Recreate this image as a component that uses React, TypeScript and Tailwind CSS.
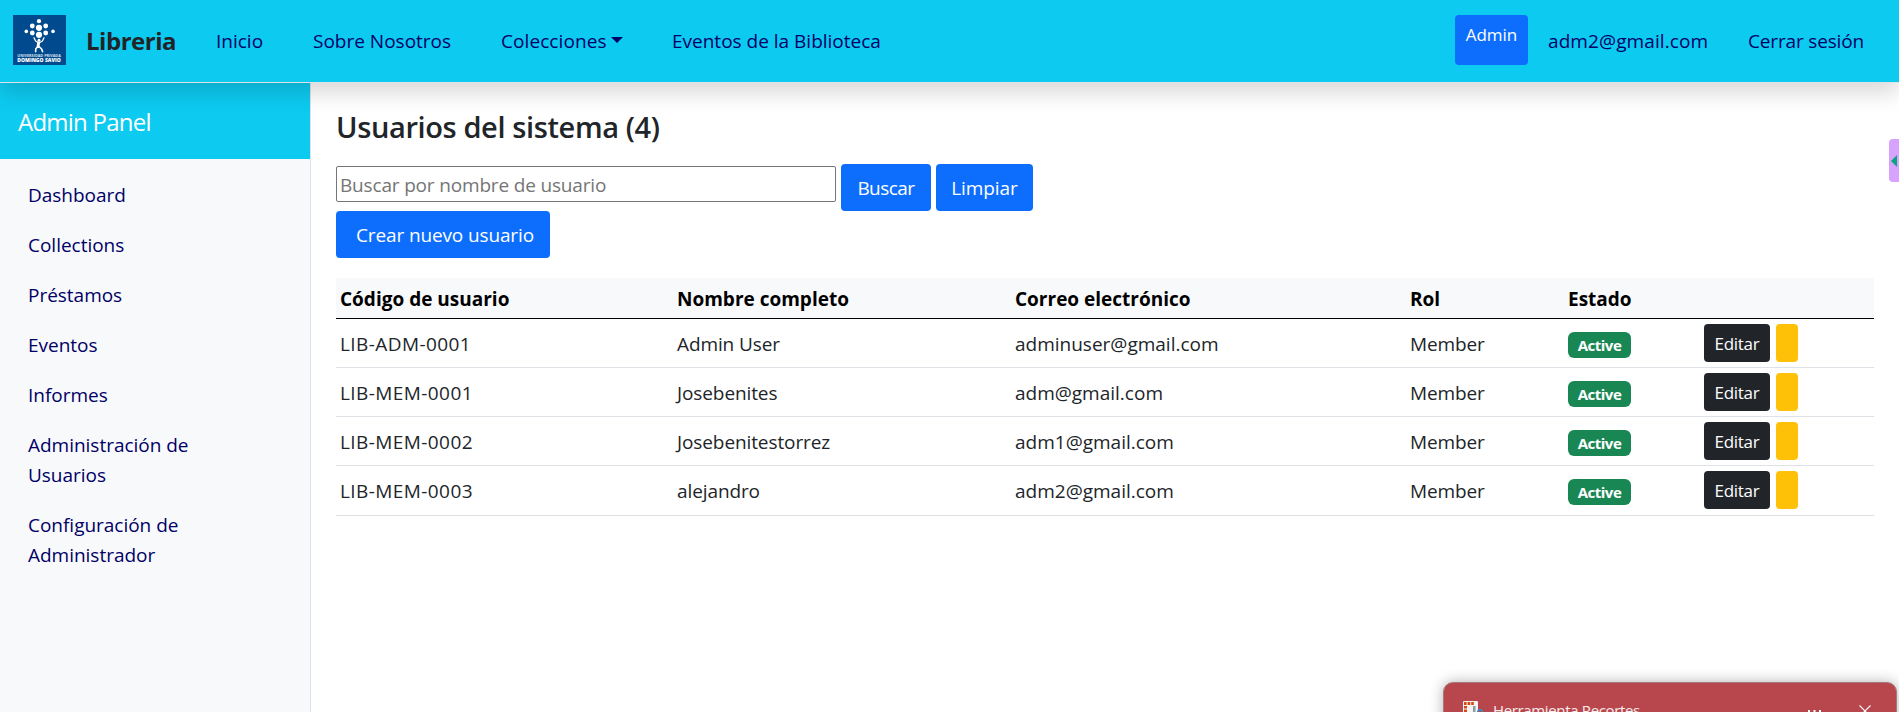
const users = [
  { code: "LIB-ADM-0001", name: "Admin User", email: "adminuser@gmail.com" },
  { code: "LIB-MEM-0001", name: "Josebenites", email: "adm@gmail.com" },
  { code: "LIB-MEM-0002", name: "Josebenitestorrez", email: "adm1@gmail.com" },
  { code: "LIB-MEM-0003", name: "alejandro", email: "adm2@gmail.com" },
];

const menu = [
  "Dashboard",
  "Collections",
  "Préstamos",
  "Eventos",
  "Informes",
  "Administración de Usuarios",
  "Configuración de Administrador",
];

function Logo() {
  return (
    <svg className="h-[50px] w-[53px] shrink-0" viewBox="0 0 53 50">
      <rect width="53" height="50" fill="#004a8d" />
      <g fill="#fff">
        <circle cx="26" cy="6.2" r="2.1" />
        <circle cx="19.3" cy="11" r="2.4" />
        <circle cx="32.7" cy="11" r="2.4" />
        <circle cx="26" cy="12.8" r="3.1" />
        <circle cx="13.3" cy="16.4" r="1.8" />
        <circle cx="40" cy="16.4" r="1.8" />
        <circle cx="19.3" cy="18" r="2.4" />
        <circle cx="32.7" cy="18" r="2.4" />
        <circle cx="26" cy="19.8" r="3.1" />
        <circle cx="26" cy="25.2" r="1.4" />
      </g>
      <g fill="none" stroke="#fff" strokeLinecap="round" strokeLinejoin="round">
        <path d="M21 22.8 L22.6 26 L26 28 L29.4 26 L31 22.8" strokeWidth="1.3" />
        <path d="M25.7 27.6 L25 31.5" strokeWidth="2.9" />
        <path d="M25 31.5 L22.8 33.8 L22.6 36.6 M26 31.5 L28.6 34 L29.6 36.6" strokeWidth="1.6" />
      </g>
      <text x="4.3" y="41.5" fill="#fff" fillOpacity="0.85" fontSize="3.3" fontWeight="700" fontFamily="Open Sans, sans-serif" textLength="43.5" lengthAdjust="spacingAndGlyphs">
        UNIVERSIDAD PRIVADA
      </text>
      <text x="4.3" y="46.8" fill="#fff" fontSize="4.8" fontWeight="800" fontFamily="Open Sans, sans-serif" textLength="43.5" lengthAdjust="spacingAndGlyphs">
        DOMINGO SAVIO
      </text>
    </svg>
  );
}

function Header() {
  return (
    <header className="relative z-10 flex h-[83px] shrink-0 items-start border-b border-[#dee2e6] bg-[#0dcaf0] pr-[35px] pl-[13px] text-[#000066] shadow-[0_10px_20px_rgba(0,0,0,0.15)]">
      <div className="mt-[15px] flex h-[50px] w-full items-start">
        <Logo />
        <div className="mt-[11px] flex w-full leading-[30px]">
          <a className="ml-5 w-[130px] text-2xl leading-[30px] font-bold tracking-[-0.48px] text-[#212529]">Libreria</a>
          <a className="w-[97px]">Inicio</a>
          <a className="w-[188px]">Sobre Nosotros</a>
          <a className="flex w-[171px]">
            <span className="tracking-[0.08px]">Colecciones</span>
            <span className="mt-[11px] ml-1 size-0 border-x-[6px] border-t-[6px] border-x-transparent border-t-[#000066]" />
          </a>
          <a>Eventos de la Biblioteca</a>
        </div>
        <button className="h-[50px] w-[73px] shrink-0 rounded bg-[#0d6efd] pt-[7px] pb-[17px] text-[17px] leading-[26px] text-white">Admin</button>
        <a className="mt-[11px] ml-5 w-[200px] shrink-0 leading-[30px] tracking-[0.1px]">adm2@gmail.com</a>
        <a className="mt-[11px] shrink-0 leading-[30px] tracking-[-0.16px]">Cerrar sesión</a>
      </div>
    </header>
  );
}

function Sidebar() {
  return (
    <aside className="w-[311px] shrink-0 border-r border-[#dee2e6] bg-[#f8f9fa]">
      <div className="h-[76px] bg-[#0dcaf0] pt-5 pl-[18px] text-2xl leading-[38px] tracking-[-0.76px] text-white">Admin Panel</div>
      <nav className="flex flex-col gap-5 pt-[21px] pl-7">
        {menu.map((m) => (
          <a key={m} className="w-[180px] leading-[30px] tracking-[-0.02px] text-[#000066]">
            {m}
          </a>
        ))}
      </nav>
    </aside>
  );
}

function UsersTable() {
  return (
    <table className="mt-5 w-[1538px] table-fixed border-separate border-spacing-0 text-left">
      <colgroup>
        <col className="w-[337px]" />
        <col className="w-[338px]" />
        <col className="w-[395px]" />
        <col className="w-[158px]" />
        <col className="w-[136px]" />
        <col />
      </colgroup>
      <thead>
        <tr className="h-[41px] bg-[#f8f9fa] text-black">
          {["Código de usuario", "Nombre completo", "Correo electrónico", "Rol", "Estado", ""].map((h, i) => (
            <th key={i} className="border-b border-black p-0 pl-1 align-top leading-[30px] font-bold">
              <div className="pt-1.5">{h}</div>
            </th>
          ))}
        </tr>
      </thead>
      <tbody>
        {users.map((u) => (
          <tr key={u.code} className="h-[49px] leading-[30px] last:h-[50px] *:border-b *:border-[#dee2e6] *:p-0 *:pl-1 *:align-top">
            <td>
              <div className="pt-2.5 tracking-[0.42px]">{u.code}</div>
            </td>
            <td>
              <div className="pt-2.5 tracking-[-0.1px]">{u.name}</div>
            </td>
            <td>
              <div className="pt-2.5">{u.email}</div>
            </td>
            <td>
              <div className="pt-2.5 tracking-[-0.12px]">Member</div>
            </td>
            <td>
              <div className="mt-[13px] h-[26px] w-[63px] rounded-md bg-[#198754] text-center text-[15px] leading-[26px] font-bold tracking-[-0.5px] text-white">Active</div>
            </td>
            <td>
              <div className="flex gap-1.5 pt-[5px]">
                <button className="h-[38px] w-[66px] rounded bg-[#212529] text-[17px] leading-[39px] tracking-[-0.3px] text-white">Editar</button>
                <button className="h-[38px] w-[22px] rounded bg-[#ffc107]" aria-label="Bloquear" />
              </div>
            </td>
          </tr>
        ))}
      </tbody>
    </table>
  );
}

function SnipNotice() {
  return (
    <div className="absolute top-[682px] left-[1443px] flex h-[60px] w-[454px] items-start rounded-[10px] border border-[#a3797c] bg-[#b7474d] pt-[18px] pl-[19px] text-[15px] text-white/90 shadow-[0_0_14px_rgba(0,0,0,0.3)]">
      <svg className="h-5 w-5" viewBox="0 0 20 20">
        <rect width="15" height="20" rx="1" fill="#f6f3f2" />
        <path d="M1 2.5H11" stroke="#d9480f" strokeWidth="3" strokeDasharray="2.6 1" />
        <path d="M2.5 5V20" stroke="#d9480f" strokeWidth="3" strokeDasharray="2.6 1" />
        <path d="M10 5h2.5v10H10z" fill="#8d9ba3" />
        <circle cx="17" cy="11" r="2.3" fill="none" stroke="#2b93d1" strokeWidth="1.4" />
      </svg>
      <span className="-mt-px ml-2.5 w-[315px] leading-5 tracking-[-0.35px]">Herramienta Recortes</span>
      <svg className="h-5 w-[15px]" viewBox="0 0 15 20" fill="#fff">
        <rect x="0" y="9" width="2" height="2" />
        <rect x="5.5" y="9" width="2" height="2" />
        <rect x="11" y="9" width="2" height="2" />
      </svg>
      <svg className="mt-1 ml-9 size-3" viewBox="0 0 12 12" fill="none" stroke="#fff" strokeWidth="1.1">
        <path d="M.5.5l11 11M11.5.5l-11 11" />
      </svg>
    </div>
  );
}

export default function App() {
  return (
    <div className="relative flex h-[712px] w-[1899px] flex-col overflow-hidden bg-white font-['Open_Sans',sans-serif] text-[19px] text-[#212529]">
      <Header />
      <div className="flex flex-1">
        <Sidebar />
        <main className="flex-1 pt-[26px] pl-[25px]">
          <h4 className="text-[29px] leading-9 font-semibold tracking-[-0.38px]">Usuarios del sistema (4)</h4>
          <div className="mt-[19px] flex items-start gap-[5px]">
            <input
              className="mt-0.5 h-9 w-[500px] rounded-[2px] border border-[#767676] bg-white px-[3px] pt-0.5 tracking-[-0.17px] placeholder:text-[#757575]"
              placeholder="Buscar por nombre de usuario"
            />
            <button className="h-[47px] w-[90px] rounded bg-[#0d6efd] pt-px leading-[46px] tracking-[-0.53px] text-white">Buscar</button>
            <button className="h-[47px] w-[97px] rounded bg-[#0d6efd] pt-px leading-[46px] tracking-[-0.05px] text-white">Limpiar</button>
          </div>
          <button className="block h-[47px] w-[214px] rounded bg-[#0d6efd] pt-px pl-1 leading-[46px] tracking-[-0.13px] text-white">Crear nuevo usuario</button>
          <UsersTable />
        </main>
      </div>
      <div className="absolute top-[139px] right-0 flex h-[43px] w-2.5 items-center rounded-l bg-[#d8a2ff] pl-0.5">
        <span className="size-0 border-y-[6px] border-r-[6px] border-y-transparent border-r-[#0aa57f]" />
      </div>
      <SnipNotice />
    </div>
  );
}
